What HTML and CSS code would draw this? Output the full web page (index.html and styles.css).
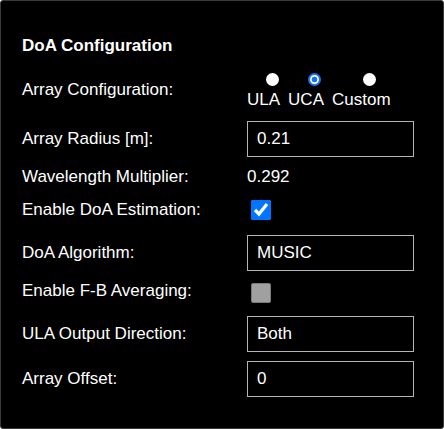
FILE: index.html
```html
<!DOCTYPE html>
<html>
<head>
<meta charset="utf-8">
<link rel="stylesheet" href="styles.css">
</head>
<body>
<div class="panel">
  <div class="title">DoA Configuration</div>
  <div class="row row-config">
    <span class="label">Array Configuration:</span>
    <div class="radios">
      <label class="opt"><input type="radio" name="cfg" class="radio"><span>ULA</span></label>
      <label class="opt"><input type="radio" name="cfg" class="radio" checked><span>UCA</span></label>
      <label class="opt"><input type="radio" name="cfg" class="radio"><span>Custom</span></label>
    </div>
  </div>
  <div class="row row-radius">
    <span class="label">Array Radius [m]:</span>
    <input class="field" type="text" value="0.21">
  </div>
  <div class="row">
    <span class="label">Wavelength Multiplier:</span>
    <span class="value">0.292</span>
  </div>
  <div class="row">
    <span class="label">Enable DoA Estimation:</span>
    <input type="checkbox" class="check" checked>
  </div>
  <div class="row row-algo">
    <span class="label">DoA Algorithm:</span>
    <input class="field" type="text" value="MUSIC">
  </div>
  <div class="row row-tight">
    <span class="label fb">Enable F-B Averaging:</span>
    <input type="checkbox" class="check gray">
  </div>
  <div class="row">
    <span class="label">ULA Output Direction:</span>
    <input class="field" type="text" value="Both">
  </div>
  <div class="row row-tight">
    <span class="label">Array Offset:</span>
    <input class="field" type="text" value="0">
  </div>
</div>
</body>
</html>
```

FILE: styles.css
```css
html, body {
  margin: 0;
  padding: 0;
  background: #fff;
}
body {
  font-family: "Liberation Sans", Arial, sans-serif;
  font-size: 17px;
  color: #fff;
}
.panel {
  box-sizing: border-box;
  width: 444px;
  height: 429px;
  background: #000;
  border: 1px solid #3a3a3a;
  border-radius: 3px;
  padding: 35px 21px 0 21px;
  display: flex;
  flex-direction: column;
}
.title {
  font-weight: bold;
  line-height: 20px;
  height: 20px;
}
.row {
  display: flex;
  align-items: center;
  margin-top: 10px;
}
.row-config {
  margin-top: 14px;
}
.row-radius {
  margin-top: 11px;
}
.row-algo {
  margin-top: 12px;
}
.row-tight {
  margin-top: 9px;
}
.label {
  width: 225px;
  flex: none;
  line-height: 20px;
}
.label.fb {
  position: relative;
  top: -2px;
}
.value {
  line-height: 20px;
}
.radios {
  display: flex;
  gap: 8px;
}
.opt {
  display: flex;
  flex-direction: column;
  align-items: center;
  line-height: 20px;
}
.radio {
  appearance: none;
  -webkit-appearance: none;
  width: 13px;
  height: 13px;
  margin: 3px 0 4px 17px;
  border-radius: 50%;
  background: #fff;
  box-sizing: border-box;
}
.radio:checked {
  border: 2px solid #1a73f0;
  background: radial-gradient(circle, #1a73f0 0 2.6px, #fff 3.2px);
}
.field {
  box-sizing: border-box;
  width: 167px;
  height: 36px;
  margin: 0;
  padding: 0 9px;
  background: #000;
  color: #fff;
  border: 1px solid #b4b4b4;
  border-radius: 0;
  font-family: "Liberation Sans", Arial, sans-serif;
  font-size: 17px;
  outline: none;
}
.check {
  width: 20px;
  height: 20px;
  margin: 3px 3px 3px 4px;
  accent-color: #0075ff;
}
.check.gray {
  appearance: none;
  -webkit-appearance: none;
  box-sizing: border-box;
  background: #a0a0a0;
  border: 1px solid #7a7a7a;
  border-radius: 2px;
}
```
